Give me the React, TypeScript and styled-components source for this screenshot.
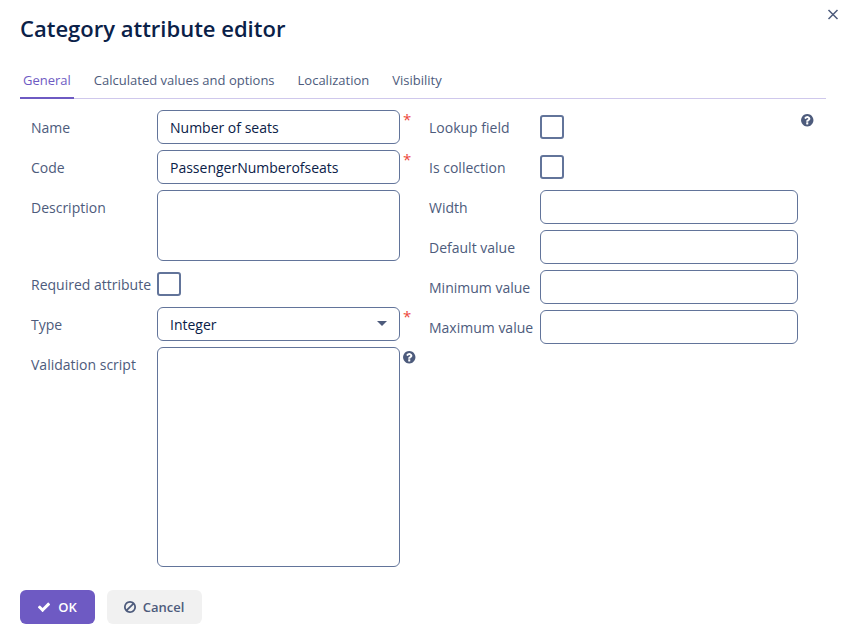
import React from "react";
import styled, { createGlobalStyle } from "styled-components";

const GlobalStyle = createGlobalStyle`
  * { box-sizing: border-box; }
  body { margin: 0; background: #fff; font-family: "Open Sans", sans-serif; font-size: 14px; color: #4d5b7c; }
  button, input, textarea { font: inherit; }
`;

const Dialog = styled.div`
  position: relative;
  width: 844px;
  height: 633px;
  padding: 0 18px 0 20px;
  display: flex;
  flex-direction: column;
  align-items: flex-start;
  overflow: hidden;
`;

const Title = styled.h1`
  margin: 12px 0 0;
  font-size: 22px;
  line-height: 32px;
  font-weight: 600;
  color: #0a2148;
`;

const CloseButton = styled.button`
  position: absolute;
  top: 9px;
  right: 5px;
  width: 12px;
  height: 12px;
  padding: 0;
  border: 0;
  background: none;
  color: #4d5b7c;
  svg { display: block; }
`;

const Tabs = styled.nav`
  display: flex;
  gap: 17px;
  width: 806px;
  height: 34px;
  margin-top: 21px;
  border-bottom: 1px solid #cfc8ec;
`;

const Tab = styled.a<{ $active?: boolean }>`
  height: 34px;
  padding: 0 3px;
  font-size: 13px;
  line-height: 31px;
  white-space: nowrap;
  color: ${(p) => (p.$active ? "#6e5ac3" : "#4d5b7c")};
  border-bottom: 2px solid ${(p) => (p.$active ? "#6e5ac3" : "transparent")};
`;

const Form = styled.div`
  display: flex;
  align-items: flex-start;
  padding: 11px 0 0 11px;
`;

const Column = styled.div<{ $width: number }>`
  display: flex;
  flex-direction: column;
  gap: 6px;
  width: ${(p) => p.$width}px;
`;

const Row = styled.div<{ $labelWidth: number; $height?: number }>`
  display: grid;
  grid-template-columns: ${(p) => p.$labelWidth}px auto 1fr;
  align-items: start;
  height: ${(p) => p.$height ?? 34}px;
`;

const Label = styled.label`
  line-height: 20px;
  padding-top: 8px;
  white-space: nowrap;
`;

const Input = styled.input<{ $width: number }>`
  width: ${(p) => p.$width}px;
  height: 34px;
  padding: 1px 12px 0;
  border: 1px solid #62749a;
  border-radius: 6px;
  outline: 0;
  background: #fff;
  color: #0a2148;
`;

const TextArea = styled.textarea`
  display: block;
  width: 243px;
  height: 100%;
  padding: 6px 12px;
  border: 1px solid #62749a;
  border-radius: 6px;
  resize: none;
  outline: 0;
  background: #fff;
  color: #0a2148;
`;

const Select = styled.div`
  display: flex;
  align-items: center;
  justify-content: space-between;
  width: 243px;
  height: 34px;
  padding: 1px 12px 0 12px;
  border: 1px solid #62749a;
  border-radius: 6px;
  color: #0a2148;
`;

const Caret = styled.span`
  margin-bottom: 2px;
  border: 5px solid transparent;
  border-top: 5px solid #4d5b7c;
  border-bottom: 0;
`;

const Checkbox = styled.span`
  width: 24px;
  height: 24px;
  margin-top: 5px;
  border: 2px solid #62749a;
  border-radius: 3px;
`;

const Required = styled.span`
  padding-left: 3px;
  font-size: 15px;
  line-height: 18px;
  color: #ed473b;
`;

const Help = styled.span`
  padding: 2.7px 0 0 1.7px;
  svg { display: block; width: 14.5px; height: 14.5px; }
`;

const Actions = styled.footer`
  display: flex;
  gap: 12px;
  margin-top: 23px;
`;

const Button = styled.button<{ $primary?: boolean }>`
  display: flex;
  align-items: center;
  justify-content: center;
  gap: ${(p) => (p.$primary ? 7 : 6)}px;
  width: ${(p) => (p.$primary ? 75 : 95)}px;
  height: 34px;
  padding: 0 ${(p) => (p.$primary ? 1 : 2)}px 0 0;
  border: 0;
  border-radius: 6px;
  font-size: 13px;
  font-weight: 600;
  background: ${(p) => (p.$primary ? "#6e5ac3" : "#f1f1f1")};
  color: ${(p) => (p.$primary ? "#fff" : "#4d5b7c")};
`;

const paths = {
  check:
    "M1671 566q0 40-28 68l-724 724-136 136q-28 28-68 28t-68-28l-136-136-362-362q-28-28-28-68t28-68l136-136q28-28 68-28t68 28l294 295 656-657q28-28 68-28t68 28l136 136q28 28 28 68z",
  ban: "M1440 893q0-161-87-295l-754 753q137 89 297 89 111 0 211.500-43.500t173.500-116.500 116-174.500 43-212.500zm-999 299l755-754q-135-91-300-91-148 0-273 73t-198 199-73 274q0 162 89 299zm1223-299q0 157-61 300t-163.500 246-245 164-298.500 61-298.500-61-245-164-163.500-246-61-300 61-299.500 163.500-245.500 245-164 298.500-61 298.500 61 245 164 163.500 245.500 61 299.500z",
  question:
    "M1024 1376v-192q0-14-9-23t-23-9h-192q-14 0-23 9t-9 23v192q0 14 9 23t23 9h192q14 0 23-9t9-23zm256-672q0-88-55.500-163t-138.500-116-170-41q-243 0-371 213-15 24 8 42l132 100q7 6 19 6 16 0 25-12 53-68 86-92 34-24 86-24 48 0 85.500 26t37.500 59q0 38-20 61t-68 45q-63 28-115.500 86.500t-52.500 125.500v36q0 14 9 23t23 9h192q14 0 23-9t9-23q0-19 21.500-49.500t54.500-49.500q32-18 49-28.500t46-35 44.500-48 28-60.500 12.500-81zm384 192q0 209-103 385.500t-279.500 279.500-385.500 103-385.500-103-279.500-279.500-103-385.500 103-385.500 279.500-279.500 385.500-103 385.500 103 279.500 279.500 103 385.500z",
};

function Icon({ name }: { name: keyof typeof paths }) {
  return (
    <svg width="14" height="14" viewBox="0 0 1792 1792" fill="currentColor" aria-hidden="true">
      <path d={paths[name]} />
    </svg>
  );
}

export default function App() {
  return (
    <>
      <GlobalStyle />
      <Dialog role="dialog">
        <Title>Category attribute editor</Title>
        <CloseButton aria-label="Close">
          <svg width="12" height="12" viewBox="0 0 12 12" fill="none" stroke="currentColor" strokeWidth="1.5">
            <path d="M1.5 1l9 9M10.500 1l-9 9" />
          </svg>
        </CloseButton>
        <Tabs>
          <Tab $active>General</Tab>
          <Tab>Calculated values and options</Tab>
          <Tab>Localization</Tab>
          <Tab>Visibility</Tab>
        </Tabs>
        <Form>
          <Column $width={398}>
            <Row $labelWidth={126}>
              <Label>Name</Label>
              <Input $width={243} defaultValue="Number of seats" />
              <Required>*</Required>
            </Row>
            <Row $labelWidth={126}>
              <Label>Code</Label>
              <Input $width={243} defaultValue="PassengerNumberofseats" />
              <Required>*</Required>
            </Row>
            <Row $labelWidth={126} $height={71}>
              <Label>Description</Label>
              <TextArea />
            </Row>
            <Row $labelWidth={126}>
              <Label>Required attribute</Label>
              <Checkbox />
            </Row>
            <Row $labelWidth={126}>
              <Label>Type</Label>
              <Select>
                Integer
                <Caret />
              </Select>
              <Required>*</Required>
            </Row>
            <Row $labelWidth={126} $height={220}>
              <Label>Validation script</Label>
              <TextArea />
              <Help>
                <Icon name="question" />
              </Help>
            </Row>
          </Column>
          <Column $width={369}>
            <Row $labelWidth={111}>
              <Label>Lookup field</Label>
              <Checkbox />
            </Row>
            <Row $labelWidth={111}>
              <Label>Is collection</Label>
              <Checkbox />
            </Row>
            {["Width", "Default value", "Minimum value", "Maximum value"].map((label) => (
              <Row key={label} $labelWidth={111}>
                <Label>{label}</Label>
                <Input $width={258} />
              </Row>
            ))}
          </Column>
          <Help>
            <Icon name="question" />
          </Help>
        </Form>
        <Actions>
          <Button $primary>
            <Icon name="check" />
            OK
          </Button>
          <Button>
            <Icon name="ban" />
            Cancel
          </Button>
        </Actions>
      </Dialog>
    </>
  );
}
